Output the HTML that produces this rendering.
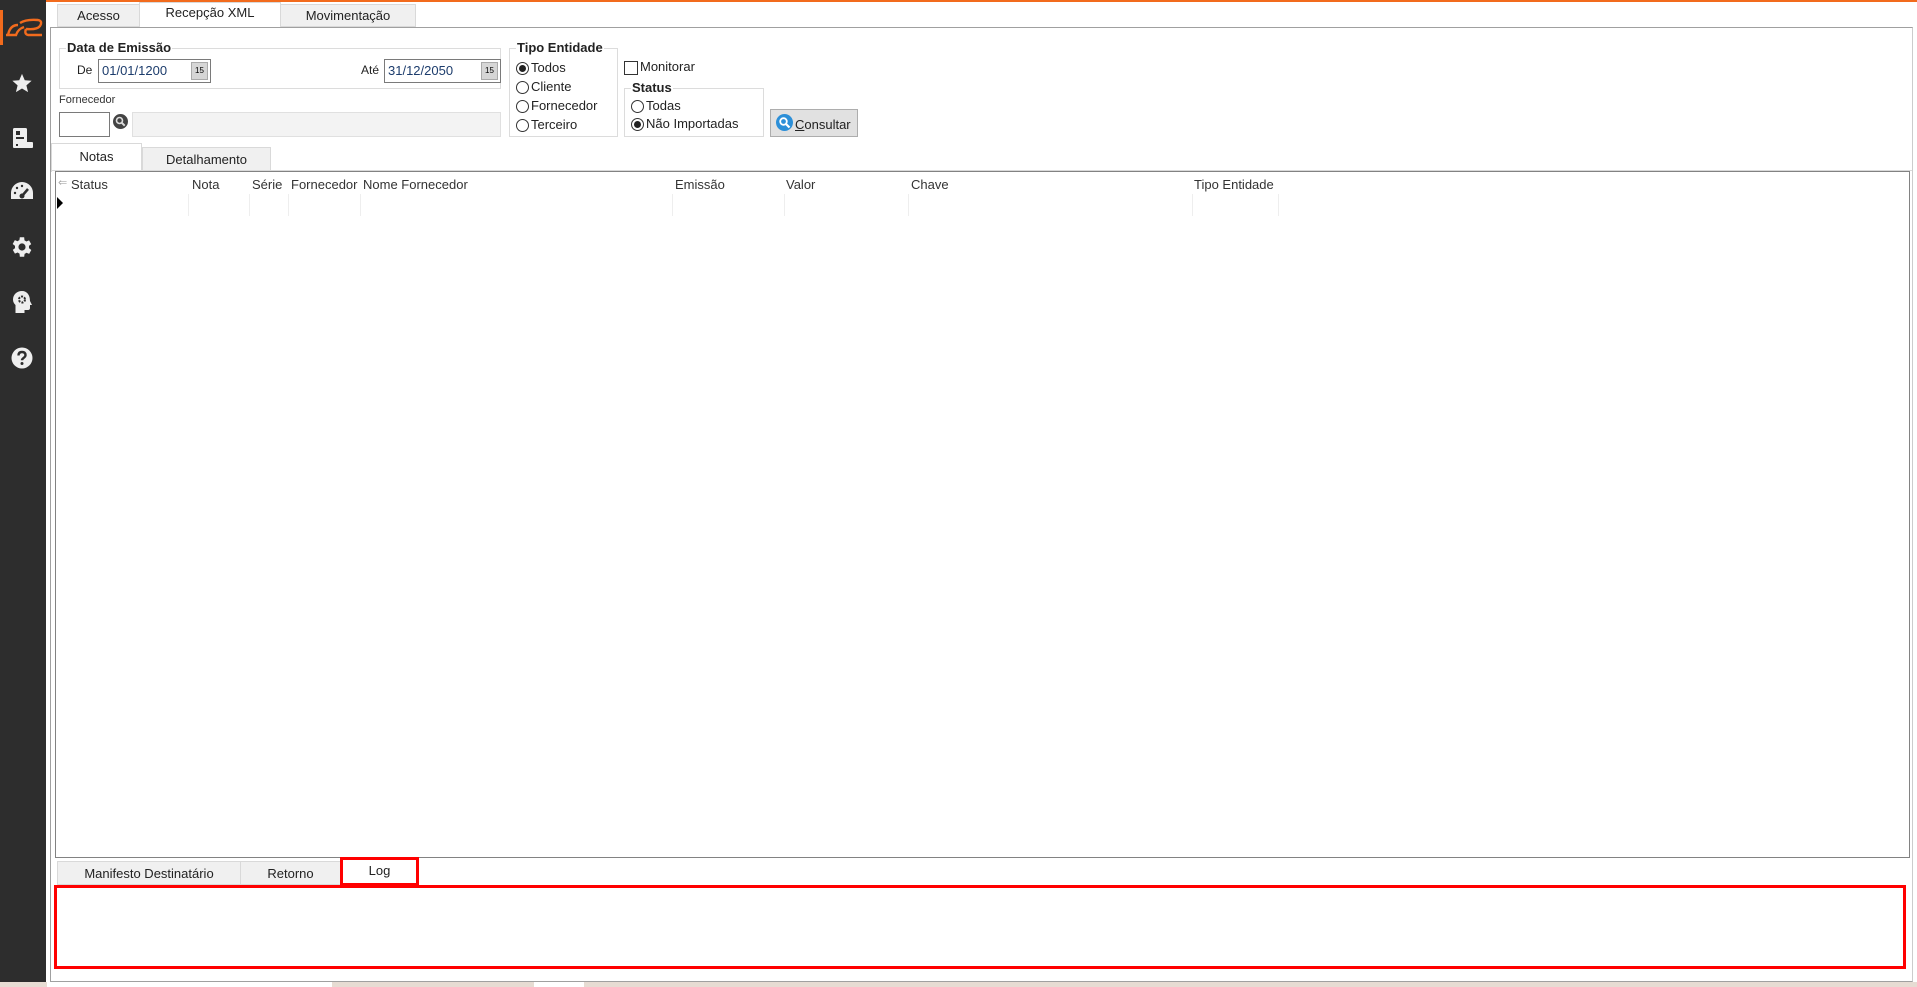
<!DOCTYPE html>
<html><head><meta charset="utf-8"><style>
*{box-sizing:border-box;margin:0;padding:0}
body{width:1917px;height:987px;position:relative;overflow:hidden;background:#fff;font-family:"Liberation Sans",sans-serif;font-size:13px;color:#222}
.a{position:absolute}
.side{left:0;top:0;width:46px;height:982px;background:#2d2d2d}
.tab{position:absolute;background:#f0f0f0;border:1px solid #d9d9d9;text-align:center;font-size:13px;color:#222}
.tab.sel{background:#fff;border-bottom-color:#fff}
.gb{position:absolute;border:1px solid #dcdcdc}
.gbl{position:absolute;background:#fff;font-weight:bold;font-size:13px;padding:0 1px;top:-9px;left:6px;color:#222}
.inp{position:absolute;border:1px solid #7a7a7a;background:#fff;color:#1c3c6c;font-size:13px;padding:3px 0 0 3px}
.cal{position:absolute;right:2px;top:2px;width:17px;height:18px;background:#d6d6d6;border:1px solid #aaa;font-size:8px;text-align:center;line-height:16px;color:#000}
.rad{position:absolute;font-size:13px;color:#222;padding-left:15px;white-space:nowrap}
.rad:before{content:"";position:absolute;left:0;top:2px;width:11px;height:11px;border:1px solid #333;border-radius:50%;background:#fff}
.rad.on:after{content:"";position:absolute;left:3px;top:5px;width:7px;height:7px;border-radius:50%;background:#222}
.hd{position:absolute;top:177px;font-size:13px;color:#333}
.sep{position:absolute;top:194px;width:1px;height:22px;background:#eee}
</style></head><body>
<div class="a" style="left:0;top:0;width:1917px;height:2px;background:#f26b1d"></div>
<div class="a side"></div>
<div class="a" style="left:0;top:10px;width:3px;height:35px;background:#f26b1d"></div>
<svg class="a" style="left:4px;top:17px" width="40" height="22" viewBox="0 0 40 22"><path d="M4 18 Q6 8 14 8 M2 18 H12 Q14 12 20 10 M16 6 Q22 2 34 3 Q39 4 36 9 Q33 13 22 12 M22 12 Q20 17 24 18 H38" fill="none" stroke="#f26b1d" stroke-width="2.4"/></svg>
<svg class="a" style="left:10px;top:72px" width="24" height="22" viewBox="0 0 24 24"><path d="M12 2l3 7 7.5.6-5.7 5 1.8 7.4L12 18l-6.6 4 1.8-7.4L1.5 9.6 9 9z" fill="#eee"/></svg>
<svg class="a" style="left:12px;top:127px" width="22" height="22" viewBox="0 0 22 22"><rect x="1" y="1" width="14" height="17" rx="1.5" fill="#eee"/><rect x="4" y="4" width="4" height="4" fill="#2d2d2d"/><rect x="4" y="10" width="8" height="2" fill="#2d2d2d"/><rect x="1" y="15" width="20" height="6" rx="1" fill="#eee"/><rect x="4" y="17" width="2" height="2" fill="#2d2d2d"/></svg>
<svg class="a" style="left:10px;top:181px" width="24" height="20" viewBox="0 0 24 20"><path d="M12 1A11 11 0 0 0 1 12v6h22v-6A11 11 0 0 0 12 1z" fill="#eee"/><path d="M12 15l6-7" stroke="#2d2d2d" stroke-width="2.5"/><circle cx="12" cy="15" r="2.5" fill="#2d2d2d"/><circle cx="5" cy="12" r="1.2" fill="#2d2d2d"/><circle cx="7" cy="7" r="1.2" fill="#2d2d2d"/><circle cx="12" cy="5" r="1.2" fill="#2d2d2d"/></svg>
<svg class="a" style="left:9px;top:234px" width="26" height="26" viewBox="0 0 24 24"><path d="M19.4 13a7.5 7.5 0 0 0 0-2l2.1-1.6-2-3.5-2.5 1a7.5 7.5 0 0 0-1.7-1L15 3h-4l-.4 2.7a7.5 7.5 0 0 0-1.7 1l-2.5-1-2 3.5L6.6 11a7.5 7.5 0 0 0 0 2l-2.1 1.6 2 3.5 2.5-1a7.5 7.5 0 0 0 1.7 1L11 21h4l.4-2.7a7.5 7.5 0 0 0 1.7-1l2.5 1 2-3.5z" fill="#eee" transform="translate(-1 0)"/><circle cx="12" cy="12" r="3.3" fill="#2d2d2d"/></svg>
<svg class="a" style="left:12px;top:290px" width="22" height="24" viewBox="0 0 22 24"><path d="M10 1C5 1 1 4.5 1 9.5c0 2.5 1 4 2.5 5.5V23h9v-3h3.5c1.5 0 2-1 2-2v-3h2l-2-4C18 5 15 1 10 1z" fill="#eee"/><circle cx="10" cy="9.5" r="3" fill="none" stroke="#2d2d2d" stroke-width="2" stroke-dasharray="2 1.2"/></svg>
<svg class="a" style="left:11px;top:347px" width="22" height="22" viewBox="0 0 22 22"><circle cx="11" cy="11" r="10.5" fill="#eee"/><path d="M7.5 8.5Q7.5 5 11 5t3.5 3.3c0 2.5-3.5 2.5-3.5 5" fill="none" stroke="#2d2d2d" stroke-width="2.4"/><circle cx="11" cy="16.5" r="1.5" fill="#2d2d2d"/></svg>

<div class="tab" style="left:57px;top:4px;width:83px;height:23px;line-height:22px">Acesso</div>
<div class="tab sel" style="left:139px;top:2px;width:142px;height:26px;line-height:20px">Recepção XML</div>
<div class="tab" style="left:280px;top:4px;width:136px;height:23px;line-height:22px">Movimentação</div>
<div class="a" style="left:50px;top:27px;width:1863px;height:955px;border:1px solid #a0a0a0;border-right-color:#ccc"></div>

<div class="gb" style="left:59px;top:48px;width:442px;height:41px"><span class="gbl">Data de Emissão</span></div>
<div class="a" style="left:77px;top:63px;font-size:12px">De</div>
<div class="inp" style="left:98px;top:59px;width:113px;height:24px">01/01/1200<div class="cal">15</div></div>
<div class="a" style="left:361px;top:63px;font-size:12px">Até</div>
<div class="inp" style="left:384px;top:59px;width:117px;height:24px">31/12/2050<div class="cal">15</div></div>
<div class="a" style="left:59px;top:94px;font-size:11px;color:#333">Fornecedor</div>
<div class="a" style="left:59px;top:112px;width:51px;height:25px;border:1px solid #7a7a7a"></div>
<svg class="a" style="left:113px;top:114px" width="15" height="15" viewBox="0 0 15 15"><circle cx="7.5" cy="7.5" r="7.5" fill="#444"/><circle cx="6.5" cy="6.5" r="3" fill="none" stroke="#ddd" stroke-width="1.6"/><path d="M8.7 8.7l3 3" stroke="#ddd" stroke-width="2"/></svg>
<div class="a" style="left:132px;top:112px;width:369px;height:25px;border:1px solid #e0e0e0;background:#f3f3f3"></div>

<div class="gb" style="left:509px;top:48px;width:109px;height:89px"><span class="gbl">Tipo Entidade</span></div>
<div class="rad on" style="left:516px;top:60px">Todos</div>
<div class="rad" style="left:516px;top:79px">Cliente</div>
<div class="rad" style="left:516px;top:98px">Fornecedor</div>
<div class="rad" style="left:516px;top:117px">Terceiro</div>
<div class="a" style="left:624px;top:61px;width:14px;height:14px;border:1px solid #333"></div>
<div class="a" style="left:640px;top:59px">Monitorar</div>
<div class="gb" style="left:624px;top:88px;width:140px;height:49px"><span class="gbl">Status</span></div>
<div class="rad" style="left:631px;top:98px">Todas</div>
<div class="rad on" style="left:631px;top:116px">Não Importadas</div>
<div class="a" style="left:770px;top:109px;width:88px;height:28px;background:#e1e1e1;border:1px solid #adadad"></div>
<svg class="a" style="left:776px;top:114px" width="17" height="17" viewBox="0 0 17 17"><circle cx="8.5" cy="8.5" r="8.5" fill="#2c8fd8"/><circle cx="7.5" cy="7.5" r="3.3" fill="none" stroke="#fff" stroke-width="1.8"/><path d="M10 10l3.5 3.5" stroke="#fff" stroke-width="2.2"/></svg>
<div class="a" style="left:795px;top:117px"><u>C</u>onsultar</div>

<div class="tab sel" style="left:51px;top:143px;width:91px;height:29px;line-height:26px;border-bottom:none">Notas</div>
<div class="tab" style="left:142px;top:147px;width:129px;height:24px;line-height:24px">Detalhamento</div>
<div class="a" style="left:51px;top:170px;width:1861px;height:1px;background:#d9d9d9"></div>
<div class="a" style="left:55px;top:171px;width:1855px;height:687px;border:1px solid #828282"></div>
<div class="a" style="left:58px;top:176px;font-size:11px;color:#aaa">⇐</div>
<div class="hd" style="left:71px">Status</div>
<div class="hd" style="left:192px">Nota</div>
<div class="hd" style="left:252px">Série</div>
<div class="hd" style="left:291px">Fornecedor</div>
<div class="hd" style="left:363px">Nome Fornecedor</div>
<div class="hd" style="left:675px">Emissão</div>
<div class="hd" style="left:786px">Valor</div>
<div class="hd" style="left:911px">Chave</div>
<div class="hd" style="left:1194px">Tipo Entidade</div>
<div class="sep" style="left:188px"></div><div class="sep" style="left:249px"></div><div class="sep" style="left:288px"></div><div class="sep" style="left:360px"></div><div class="sep" style="left:672px"></div><div class="sep" style="left:784px"></div><div class="sep" style="left:908px"></div><div class="sep" style="left:1192px"></div><div class="sep" style="left:1278px"></div>
<div class="a" style="left:57px;top:197px;width:0;height:0;border-left:6px solid #000;border-top:6px solid transparent;border-bottom:6px solid transparent"></div>

<div class="tab" style="left:57px;top:861px;width:184px;height:24px;line-height:24px">Manifesto Destinatário</div>
<div class="tab" style="left:240px;top:861px;width:101px;height:24px;line-height:24px">Retorno</div>
<div class="a" style="left:340px;top:857px;width:79px;height:29px;border:3px solid #f00;background:#fff;text-align:center;line-height:22px">Log</div>
<div class="a" style="left:54px;top:885px;width:1852px;height:84px;border:3px solid #f00;background:#fff"></div>
<div class="a" style="left:0;top:982px;width:1917px;height:5px;background:#e7dcd3"></div>
<div class="a" style="left:47px;top:982px;width:285px;height:5px;background:#fff"></div>
<div class="a" style="left:534px;top:982px;width:50px;height:5px;background:#fff"></div>
</body></html>
